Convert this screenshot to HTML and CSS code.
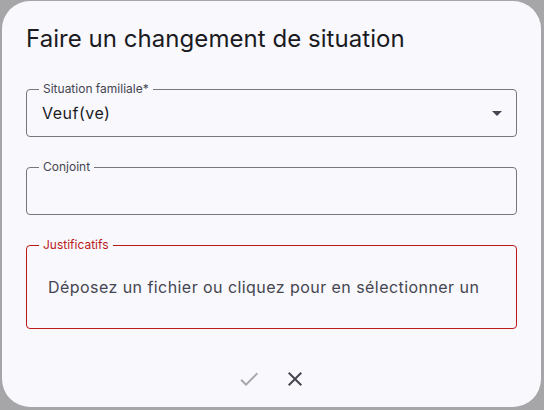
FILE: index.html
```html
<!DOCTYPE html>
<html lang="fr">
<head>
  <meta charset="UTF-8" />
  <meta name="viewport" content="width=device-width, initial-scale=1.0"/>
  <title>Changement de situation</title>
  <link rel="stylesheet" href="styles.css">
</head>
<body>

  <div class="dialog">
    <h2 class="dialog-title">Faire un changement de situation</h2>

    <form class="dialog-form">
      <div class="field field-select">
        <span class="field-label">Situation familiale*</span>
        <span class="field-value">Veuf(ve)</span>
        <svg class="select-arrow" viewBox="0 0 10 5" width="10" height="5">
          <path d="M0 0h10L5 5z" fill="currentColor"/>
        </svg>
      </div>

      <div class="field">
        <span class="field-label">Conjoint</span>
      </div>

      <div class="field field-drop field-error">
        <span class="field-label">Justificatifs</span>
        <span class="drop-text">Déposez un fichier ou cliquez pour en sélectionner un</span>
      </div>
    </form>

    <div class="dialog-actions">
      <button class="icon-btn" disabled>
        <svg viewBox="0 0 24 24" width="24" height="24">
          <path d="M9 16.17 4.83 12l-1.42 1.41L9 19 21 7l-1.41-1.41z" fill="currentColor"/>
        </svg>
      </button>
      <button class="icon-btn">
        <svg viewBox="0 0 24 24" width="24" height="24">
          <path d="M19 6.41 17.59 5 12 10.59 6.41 5 5 6.41 10.59 12 5 17.59 6.41 19 12 13.41 17.59 19 19 17.59 13.41 12z" fill="currentColor"/>
        </svg>
      </button>
    </div>
  </div>

</body>
</html>
```

FILE: styles.css
```css
body {
  margin: 0;
  padding: 1px 3px 3px 2px;
  height: 410px;
  box-sizing: border-box;
  background-color: #a6a6a9;
  font-family: Inter, "Noto Sans", sans-serif;
  overflow: hidden;
}

.dialog {
  height: 406px;
  box-sizing: border-box;
  padding: 22px 24px;
  background: #f8f8fd;
  border-radius: 28px;
  color: #1b1b1f;
}

.dialog-title {
  margin: 0;
  font-size: 24px;
  line-height: 32px;
  font-weight: 400;
  letter-spacing: 0.05px;
}

.dialog-form {
  margin-top: 34px;
  display: flex;
  flex-direction: column;
  gap: 30px;
}

.field {
  position: relative;
  height: 48px;
  box-sizing: border-box;
  border: 1px solid #76767f;
  border-radius: 4px;
  display: flex;
  align-items: center;
  padding: 0 15px;
}

.field-label {
  position: absolute;
  top: -9px;
  left: 12px;
  padding: 0 4px;
  background: #f8f8fd;
  font-size: 12px;
  line-height: 16px;
  color: #45464f;
}

.field-value {
  flex: 1;
  font-size: 16px;
  line-height: 24px;
  letter-spacing: 0.5px;
  color: #1b1b1f;
}

.select-arrow {
  color: #45464f;
  margin-right: -1px;
}

.field-drop {
  height: 84px;
  padding: 0 21px;
}

.field-error {
  border-color: #ba1a1a;
}

.field-error .field-label {
  color: #ba1a1a;
}

.drop-text {
  font-size: 16px;
  line-height: 24px;
  letter-spacing: 0.44px;
  color: #45464f;
}

.dialog-actions {
  margin-top: 30px;
  display: flex;
  justify-content: center;
  gap: 6px;
}

.icon-btn {
  width: 40px;
  height: 40px;
  padding: 8px;
  border: none;
  background: none;
  border-radius: 50%;
  color: #45464f;
  cursor: pointer;
}

.icon-btn svg {
  display: block;
}

.icon-btn:disabled {
  color: #a7a7ab;
  cursor: default;
}
```
